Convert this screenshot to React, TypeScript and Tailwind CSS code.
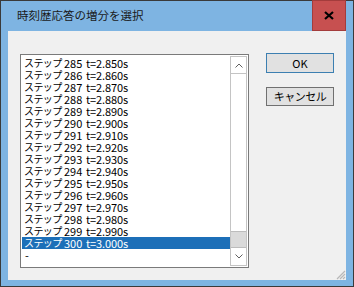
import React from 'react';

const jp = { fontFamily: '"Noto Sans CJK JP", "Noto Sans", sans-serif' };

const steps = Array.from({ length: 16 }, (_, i) => {
     const n = 285 + i;
     return { n, t: (n / 100).toFixed(3) };
});

function ScrollBar() {
     return (
          <div className="flex flex-col w-[17px] h-full border border-[#c4c4c4] bg-white">
               <div className="h-[17px] flex items-center justify-center border-b border-[#c4c4c4]">
                    <svg width="8" height="5" viewBox="0 0 8 5">
                         <path d="M0.5 4.5 L4 1 L7.5 4.5" fill="none" stroke="#606060" strokeWidth="1" />
                    </svg>
               </div>
               <div className="flex-1" />
               <div className="h-[17px] bg-[#dadada] border-y border-[#bcbcbc]" />
               <div className="h-[17px] flex items-center justify-center">
                    <svg width="8" height="5" viewBox="0 0 8 5">
                         <path d="M0.5 0.5 L4 4 L7.5 0.5" fill="none" stroke="#606060" strokeWidth="1" />
                    </svg>
               </div>
          </div>
     );
}

export default function App() {
     return (
          <div className="w-[354px] h-[287px] bg-[#3a3a3a] p-px" style={jp}>
               <div className="flex flex-col w-full h-full bg-[#7eb4e2]">
                    {/* title bar */}
                    <div className="flex h-[30px] items-stretch">
                         <div className="flex-1 flex items-center pl-[16px] text-[11.5px] text-[#1a1a1a]">
                              時刻歴応答の増分を選択
                         </div>
                         <div className="w-[34px] mr-[7px] -mt-px bg-[#c75050] border border-[#a33c3c] flex items-center justify-center">
                              <svg width="10" height="9" viewBox="0 0 10 9">
                                   <path d="M1 1 L9 8 M9 1 L1 8" stroke="#000" strokeWidth="2.2" />
                              </svg>
                         </div>
                    </div>
                    {/* client */}
                    <div className="relative flex flex-1 mx-[7px] mb-[6px] bg-[#f0f0f0] pl-[12px] pt-[23px]">
                         <div className="flex w-[229px] h-[214px] border border-[#7a7a7a] bg-white p-px">
                              <div className="flex-1 flex flex-col leading-[12px] text-black pt-px">
                                   {steps.map((s) => (
                                        <div
                                             key={s.n}
                                             className={`flex h-[12px] pl-[2px] whitespace-pre ${s.n === 300 ? 'bg-[#1c6fb8] text-white' : ''}`}
                                        >
                                             <span className="w-[39px] text-[10px] tracking-[-0.6px]">ステップ</span>
                                             <span className="ml-[1px] w-[22px] text-[11px]">{s.n}</span>
                                             <span className="text-[11px] tracking-[-0.1px]">{`t=${s.t}s`}</span>
                                        </div>
                                   ))}
                                   <div className="h-[12px] pl-[3px] text-[11px]">-</div>
                              </div>
                              <ScrollBar />
                         </div>
                         <div className="flex flex-col gap-[14px] ml-[17px] -mt-px">
                              <button className="w-[68px] h-[20px] bg-[#e1e1e1] border border-[#3c7fb1] text-[11px] leading-none text-black">
                                   OK
                              </button>
                              <button className="w-[68px] h-[19px] bg-[#e1e1e1] border border-[#707070] text-[11px] leading-none text-black tracking-[-0.5px]">
                                   キャンセル
                              </button>
                         </div>
                         <svg className="absolute right-0 bottom-0" width="12" height="12" viewBox="0 0 12 12">
                              <path d="M11 3 L3 11 M11 6 L6 11 M11 9 L9 11" stroke="#b8b8b8" strokeWidth="1.2" />
                         </svg>
                    </div>
               </div>
          </div>
     );
}
